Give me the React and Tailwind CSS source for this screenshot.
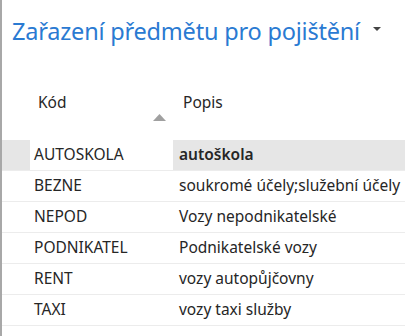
import React from 'react';

const rows = [
  { code: 'AUTOSKOLA', desc: 'autoškola', selected: true },
  { code: 'BEZNE', desc: 'soukromé účely;služební účely' },
  { code: 'NEPOD', desc: 'Vozy nepodnikatelské' },
  { code: 'PODNIKATEL', desc: 'Podnikatelské vozy' },
  { code: 'RENT', desc: 'vozy autopůjčovny' },
  { code: 'TAXI', desc: 'vozy taxi služby' },
];

export default function App() {
  return (
    <div
      className="w-[405px] h-[336px] bg-white border-l-2 border-[#a8a8a8] overflow-hidden text-[#262626]"
      style={{ fontFamily: '"Noto Sans", "Open Sans", sans-serif' }}
    >
      <div className="flex items-center h-[62px] pl-[10px] pt-[2px]">
        <h1 className="text-[23.5px] text-[#2a7ad2] tracking-[-0.2px]">Zařazení předmětu pro pojištění</h1>
        <svg width="8" height="5" viewBox="0 0 8 5" className="ml-[13px] mt-[-6px]">
          <path d="M0 0H8L4 4Z" fill="#444" />
        </svg>
      </div>

      <div className="flex h-[78px] items-start pt-[29px] text-[15.5px]">
        <div className="w-[171px] pl-[36px] relative">
          Kód
          <svg width="13" height="7" viewBox="0 0 13 7" className="absolute left-[151px] top-[23px]">
            <path d="M0 7L6.5 0L13 7Z" fill="#a0a0a0" />
          </svg>
        </div>
        <div className="pl-[10px]">Popis</div>
      </div>

      <div className="flex flex-col text-[15.5px]">
        {rows.map((r) => (
          <div
            key={r.code}
            className={`flex h-[31px] items-center border-b border-[#ececec] ${r.selected ? 'bg-[#e6e6e6]' : ''}`}
          >
            <div className="w-[28px] h-full" />
            <div className={`w-[143px] h-full flex items-center pl-[4px] ${r.selected ? 'bg-white' : ''}`}>
              {r.code}
            </div>
            <div className={`flex-1 pl-[6px] whitespace-nowrap ${r.selected ? 'font-semibold' : ''}`}>
              {r.desc}
            </div>
          </div>
        ))}
      </div>
    </div>
  );
}
